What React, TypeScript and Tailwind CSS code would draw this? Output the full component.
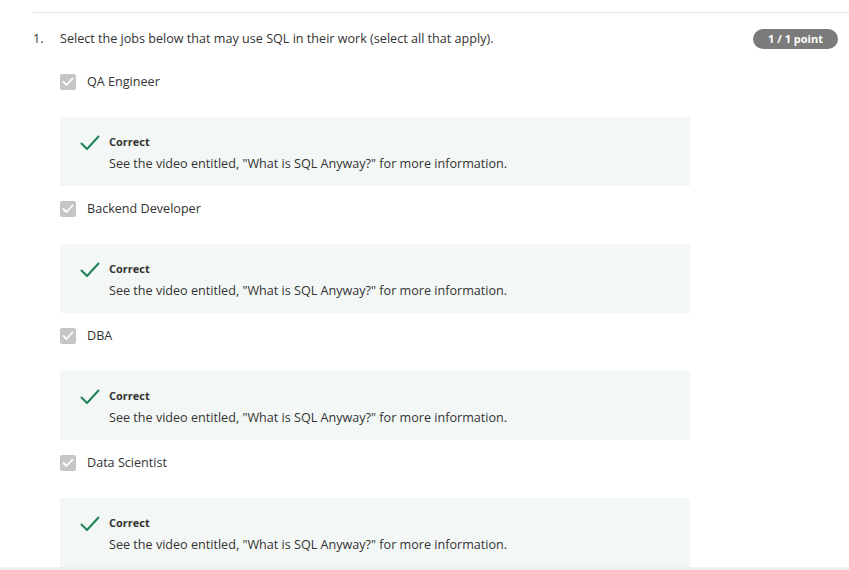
import React from "react";

const options = ["QA Engineer", "Backend Developer", "DBA", "Data Scientist"];

const CheckIcon = () => (
  <svg width="20" height="16" viewBox="0 0 20 16" fill="none">
    <path d="M1.5 8.5 L7 14 L18.5 1.5" stroke="#1f8354" strokeWidth="2" strokeLinecap="round" strokeLinejoin="round" />
  </svg>
);

const Option = ({ label, first }: { label: string; first: boolean }) => (
  <div className={first ? "" : "mt-[15px]"}>
    <div className="flex items-center h-4">
      <div className="w-4 h-4 rounded-[2px] bg-[#c6c6c6] flex items-center justify-center">
        <svg width="12" height="10" viewBox="0 0 12 10" fill="none">
          <path d="M1.5 5 L4.5 8 L10.5 1.5" stroke="#ffffff" strokeWidth="1.8" strokeLinecap="round" strokeLinejoin="round" />
        </svg>
      </div>
      <span className="ml-[11px] text-[12.6px] text-[#333]">{label}</span>
    </div>
    <div className="mt-[27px] w-[630px] h-[69px] bg-[#f3f8f6] flex pl-5 pt-[18px]">
      <CheckIcon />
      <div className="ml-[9px] -mt-[1px]">
        <p className="text-[11px] font-bold text-[#333] leading-[16px]">Correct</p>
        <p className="text-[12.6px] text-[#333] leading-[20px] mt-[4px]">
          See the video entitled, "What is SQL Anyway?" for more information.
        </p>
      </div>
    </div>
  </div>
);

export default function App() {
  return (
    <div className="w-[849px] h-[570px] bg-white flex flex-col overflow-hidden" style={{ fontFamily: '"Open Sans", sans-serif' }}>
      <div className="ml-[33px] mt-3 border-t border-[#e3e3e3]" />
      <div className="flex items-center justify-between ml-[33px] mr-[11px] mt-[16px] h-5">
        <div className="flex items-center text-[12.6px] text-[#333]">
          <span className="w-[27px]">1.</span>
          <span>Select the jobs below that may use SQL in their work (select all that apply).</span>
        </div>
        <div className="h-5 w-[85px] rounded-full bg-[#7b7b7b] text-white text-[11px] font-bold flex items-center justify-center">
          1 / 1 point
        </div>
      </div>
      <div className="ml-[60px] mt-[25px] flex-1">
        {options.map((o, i) => (
          <Option key={o} label={o} first={i === 0} />
        ))}
      </div>
      <div className="h-[3px] bg-[#f0f0f0]" />
    </div>
  );
}
